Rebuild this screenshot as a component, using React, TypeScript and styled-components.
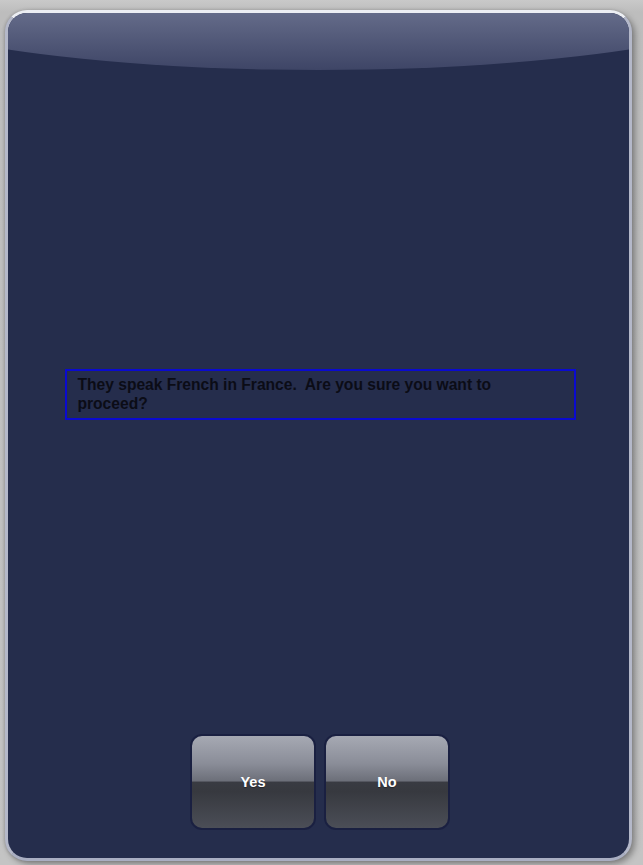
import React from "react";
import styled, { createGlobalStyle } from "styled-components";

const Global = createGlobalStyle`
  html, body { margin: 0; padding: 0; }
  body {
    background: linear-gradient(to bottom, #c9c9c9 0px, #bdbdbd 12px, #c4c4c4 100%);
    font-family: "Liberation Sans", Arial, sans-serif;
  }
`;

const Page = styled.div`
  width: 643px;
  height: 865px;
  box-sizing: border-box;
  padding: 10px 11px 4px 5px;
  display: flex;
`;

const Panel = styled.div`
  position: relative;
  flex: 1;
  box-sizing: border-box;
  border: 3px solid #b4b8c9;
  border-top-color: #eceef3;
  border-bottom-color: #a9aec2;
  border-radius: 22px;
  background: #252d4c;
  overflow: hidden;
  box-shadow: 3px 3px 6px rgba(0, 0, 0, 0.35), -1px 0 3px rgba(0, 0, 0, 0.15);
  display: flex;
  flex-direction: column;
  align-items: center;

  &::before {
    content: "";
    position: absolute;
    left: -190px;
    right: -190px;
    top: -133px;
    height: 190px;
    border-radius: 50%;
    background: linear-gradient(to bottom, #6a7190 0%, #646b89 70%, #3e4566 100%);
    pointer-events: none;
  }
`;

const Message = styled.div`
  position: relative;
  margin-top: 356px;
  margin-left: 3px;
  width: 511px;
  box-sizing: border-box;
  border: 2px solid #0a0ad0;
  padding: 4px 40px 5px 11px;
  font-size: 15.6px;
  font-weight: bold;
  line-height: 19px;
  color: #0b0c16;
  white-space: pre-wrap;
`;

const Spacer = styled.div`
  flex: 1;
`;

const ButtonRow = styled.div`
  display: flex;
  gap: 8px;
  padding-bottom: 28px;
  margin-left: 3px;
`;

const Button = styled.button`
  width: 126px;
  height: 96px;
  box-sizing: border-box;
  border: 2px solid #1a2041;
  border-radius: 12px;
  background: linear-gradient(
    to bottom,
    #a6a9b3 0%,
    #8a8d98 30%,
    #6c6f79 49%,
    #393b42 50%,
    #37393f 60%,
    #4b4e57 100%
  );
  color: #ffffff;
  font-family: "Liberation Sans", Arial, sans-serif;
  font-size: 14.5px;
  font-weight: bold;
  text-shadow: 0 1px 1px rgba(0, 0, 0, 0.35);
  display: flex;
  align-items: center;
  justify-content: center;
  padding: 0;
  cursor: pointer;
`;

export default function App() {
  return (
    <>
      <Global />
      <Page>
        <Panel>
          <Message>{"They speak French in France.  Are you sure you want to proceed?"}</Message>
          <Spacer />
          <ButtonRow>
            <Button>Yes</Button>
            <Button>No</Button>
          </ButtonRow>
        </Panel>
      </Page>
    </>
  );
}
